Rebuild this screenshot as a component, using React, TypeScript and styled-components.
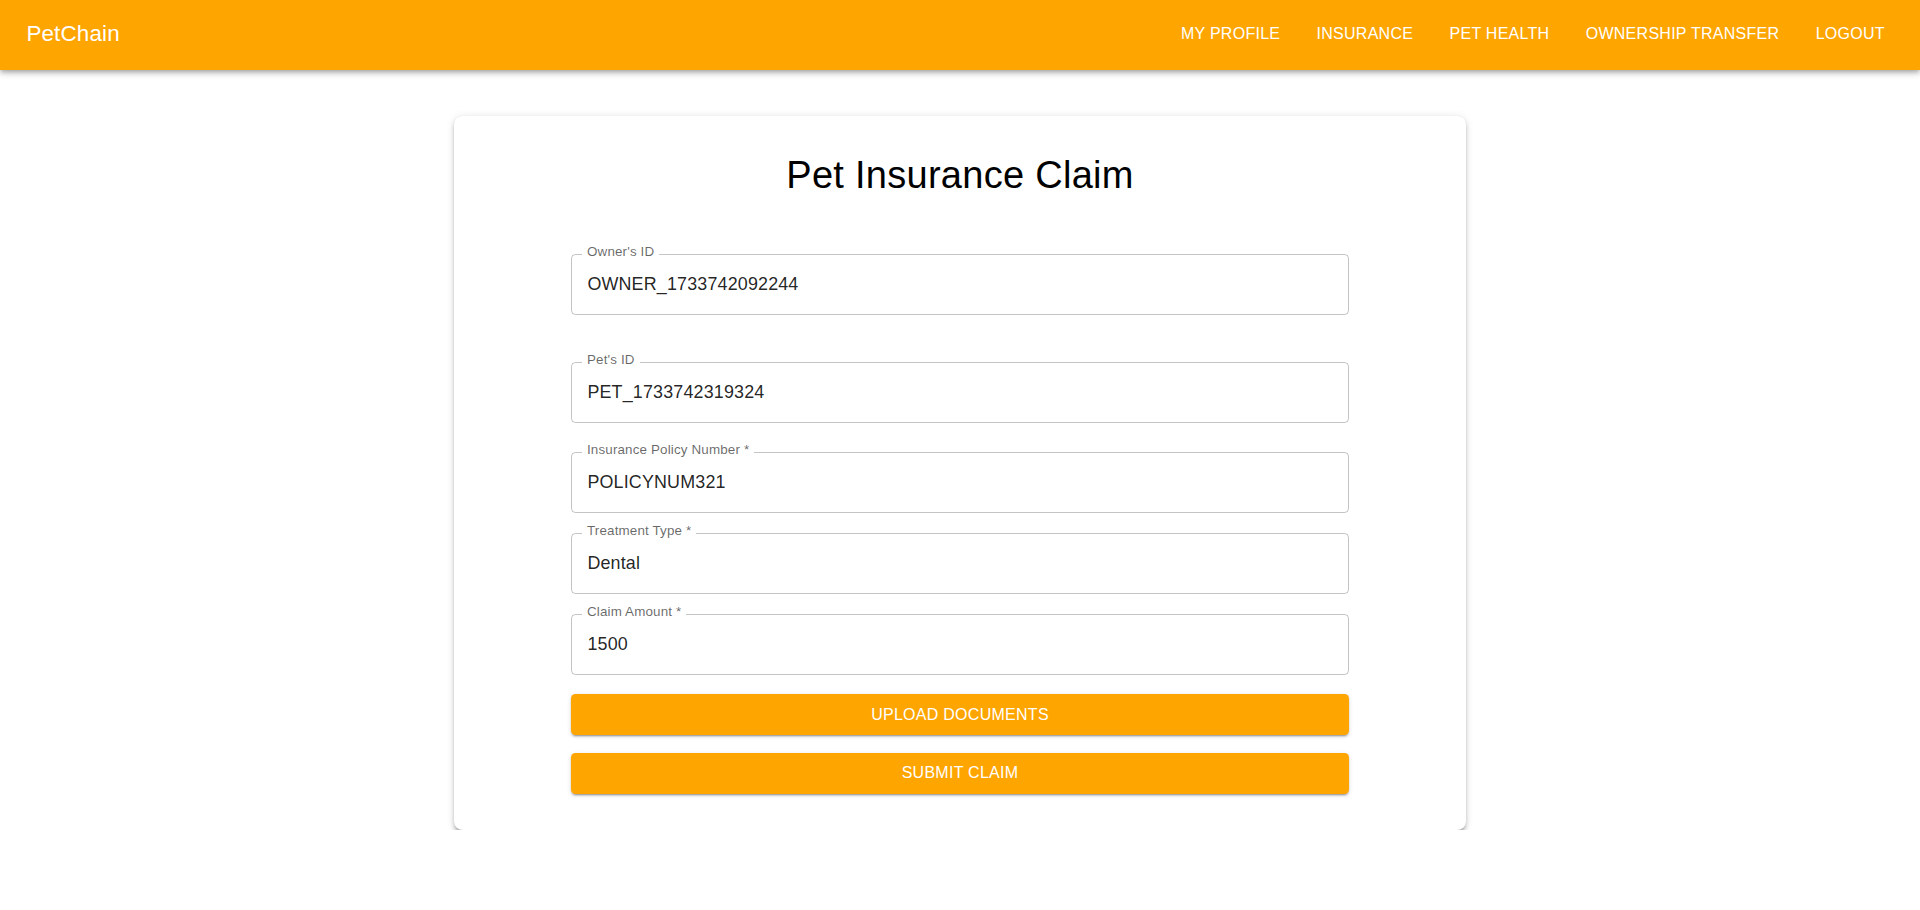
import React from "react";
import styled, { createGlobalStyle } from "styled-components";

const GlobalStyle = createGlobalStyle`
  html, body {
    margin: 0;
    padding: 0;
    background: #ffffff;
    font-family: "Liberation Sans", Arial, Helvetica, sans-serif;
  }
  * { box-sizing: border-box; }
`;

const AppBar = styled.header`
  height: 70.4px;
  background: #ffa500;
  color: #ffffff;
  display: flex;
  align-items: center;
  justify-content: space-between;
  padding: 0 26.4px;
  box-shadow: 0px 2px 4px -1px rgba(0, 0, 0, 0.2),
    0px 4px 5px 0px rgba(0, 0, 0, 0.14), 0px 1px 10px 0px rgba(0, 0, 0, 0.12);
  position: relative;
  z-index: 2;
`;

const Brand = styled.div`
  font-size: 22.4px;
  line-height: 1.6;
  letter-spacing: 0.0075em;
  font-weight: 400;
  margin-top: -2px;
`;

const NavList = styled.nav`
  display: flex;
  align-items: center;
  gap: 18.7px;
`;

const NavButton = styled.button`
  background: transparent;
  border: none;
  color: #ffffff;
  font-family: inherit;
  font-size: 16px;
  line-height: 1.75;
  letter-spacing: 0.27px;
  text-transform: uppercase;
  padding: 6.6px 8.8px;
  border-radius: 4.4px;
  cursor: pointer;
  margin-top: -2px;
`;

const Main = styled.main`
  display: flex;
  justify-content: center;
  padding-top: 45.6px;
`;

const Card = styled.section`
  width: 1012px;
  background: #ffffff;
  border-radius: 8.8px;
  padding: 36px 117px 36.5px;
  box-shadow: 0px 3.3px 3.3px -2.2px rgba(0, 0, 0, 0.22),
    0px 3.3px 4.4px 0px rgba(0, 0, 0, 0.16), 0px 1.1px 8.8px 0px rgba(0, 0, 0, 0.12);
  display: flex;
  flex-direction: column;
`;

const Title = styled.h1`
  margin: 0;
  text-align: center;
  font-size: 38px;
  line-height: 46.2px;
  font-weight: 400;
  letter-spacing: 0.00735em;
  color: #000;
`;

const Form = styled.form`
  display: flex;
  flex-direction: column;
`;

const Outline = styled.div<{ $mt: number }>`
  position: relative;
  margin-top: ${(p) => p.$mt}px;
  height: 61.6px;
  border: 1px solid rgba(0, 0, 0, 0.23);
  border-radius: 4.4px;
  display: flex;
  align-items: center;
  padding: 0 15.4px;
`;

const FieldLabel = styled.label`
  position: absolute;
  left: 10px;
  top: -10px;
  padding: 0 5px;
  background: #ffffff;
  font-size: 13.4px;
  line-height: 13.2px;
  letter-spacing: 0.15px;
  color: rgba(0, 0, 0, 0.6);
  white-space: nowrap;
`;

const FieldInput = styled.input`
  width: 100%;
  border: none;
  outline: none;
  background: transparent;
  font-family: inherit;
  font-size: 17.9px;
  line-height: 25.3px;
  letter-spacing: 0.17px;
  color: rgba(0, 0, 0, 0.87);
  padding: 0;
  margin: 0;
`;

const ActionButton = styled.button<{ $mt: number }>`
  margin-top: ${(p) => p.$mt}px;
  height: 40.2px;
  width: 100%;
  border: none;
  border-radius: 4.4px;
  background: #ffa500;
  color: #ffffff;
  font-family: inherit;
  font-size: 16px;
  letter-spacing: 0.27px;
  text-transform: uppercase;
  cursor: pointer;
  box-shadow: 0px 3px 1px -2px rgba(0, 0, 0, 0.2),
    0px 2px 2px 0px rgba(0, 0, 0, 0.14), 0px 1px 5px 0px rgba(0, 0, 0, 0.12);
`;

type FieldProps = { id: string; label: string; value: string; mt: number };

const Field = ({ id, label, value, mt }: FieldProps) => (
  <Outline $mt={mt}>
    <FieldLabel htmlFor={id}>{label}</FieldLabel>
    <FieldInput id={id} defaultValue={value} />
  </Outline>
);

const fields: FieldProps[] = [
  { id: "owner", label: "Owner's ID", value: "OWNER_1733742092244", mt: 55.5 },
  { id: "pet", label: "Pet's ID", value: "PET_1733742319324", mt: 46.6 },
  { id: "policy", label: "Insurance Policy Number *", value: "POLICYNUM321", mt: 28.4 },
  { id: "treatment", label: "Treatment Type *", value: "Dental", mt: 19.4 },
  { id: "amount", label: "Claim Amount *", value: "1500", mt: 19.2 },
];

const navItems = ["My Profile", "Insurance", "Pet Health", "Ownership Transfer", "Logout"];

export default function App() {
  return (
    <>
      <GlobalStyle />
      <AppBar>
        <Brand>PetChain</Brand>
        <NavList>
          {navItems.map((n) => (
            <NavButton key={n} type="button">
              {n}
            </NavButton>
          ))}
        </NavList>
      </AppBar>
      <Main>
        <Card>
          <Title>Pet Insurance Claim</Title>
          <Form onSubmit={(e) => e.preventDefault()}>
            {fields.map((f) => (
              <Field key={f.id} {...f} />
            ))}
            <ActionButton type="button" $mt={19.2}>
              Upload Documents
            </ActionButton>
            <ActionButton type="submit" $mt={18.8}>
              Submit Claim
            </ActionButton>
          </Form>
        </Card>
      </Main>
    </>
  );
}
